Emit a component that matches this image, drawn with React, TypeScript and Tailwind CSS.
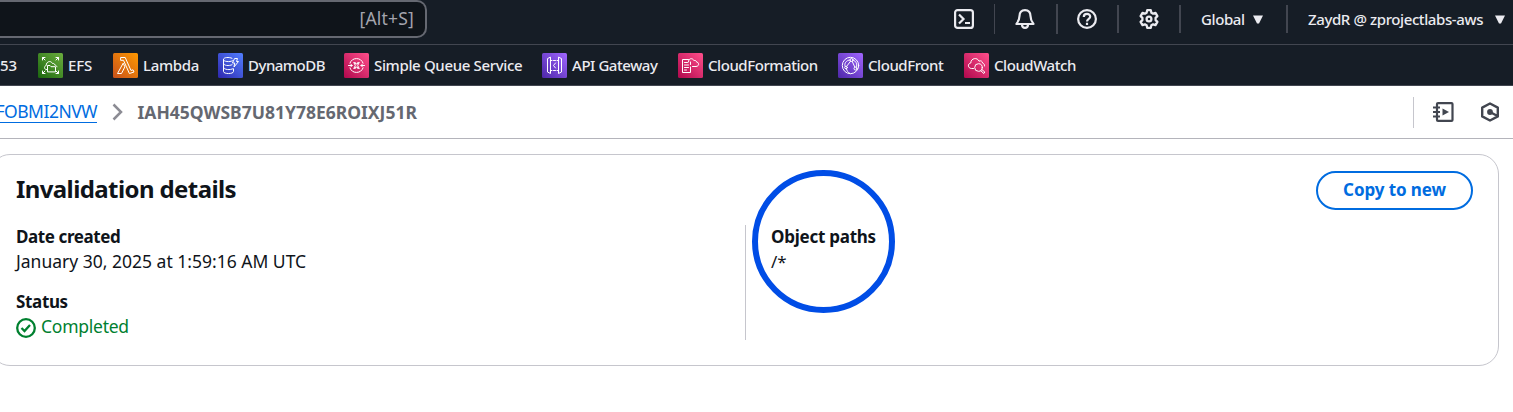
import type { ReactNode } from "react";

function ServiceIcon({ from, to, id, children }: { from: string; to: string; id: string; children: ReactNode }) {
  return (
    <svg className="size-[25px] shrink-0" viewBox="0 0 25 25" fill="none" stroke="#fff" strokeWidth="1" strokeLinejoin="round" strokeLinecap="round">
      <defs>
        <linearGradient id={id} x1="0" y1="1" x2="1" y2="0">
          <stop offset="0" stopColor={from} />
          <stop offset="1" stopColor={to} />
        </linearGradient>
      </defs>
      <rect width="25" height="25" rx="1.5" fill={`url(#${id})`} stroke="none" />
      {children}
    </svg>
  );
}

const services = [
  {
    name: "EFS", width: "w-[75px]", tracking: "tracking-[-0.1px]", from: "#1b660f", to: "#6cae3e",
    icon: (
      <>
        <path d="M4.500 7v-2.500h2.500M4.500 4.500l2.500 2.500M18 4.500h2.500v2.500M20.500 4.500l-2.500 2.500M4.500 18v2.500h2.500M4.500 20.500l2.500-2.500M20.500 18v2.500h-2.500M20.500 20.500l-2.500-2.500" />
        <path d="M9.500 18.500v-6h2.500l1 1.200h4.500v4.800zM9 16.500H8c-2-.5-2-3.500.2-4 0-4 4.500-5.500 6.300-2 1.500-.3 2.200.5 2.200 1.500 1.200.2 2 .8 2.200 1.800" />
      </>
    ),
  },
  {
    name: "Lambda", width: "w-[105px]", tracking: "tracking-[-0.35px]", from: "#c8511b", to: "#ff9900",
    icon: <path d="M10 10.500L4.500 20.500h4l3.200-6.300zM8 4.500h4.200l5.800 13 2-.7 1 2.200-4.600 1.500L10.500 7.300H8z" />,
  },
  {
    name: "DynamoDB", width: "w-[126px]", tracking: "tracking-[-0.5px]", from: "#2e27ad", to: "#527fff",
    icon: (
      <>
        <path d="M14 5.300C11 3.800 5.500 4.300 5.500 6.500s6 2.800 9 1.300M5.500 6.500v12c0 2.700 10 2.700 10 0V16" />
        <path d="M5.500 10.500c0 2.300 5.500 2.600 8.500 1.300M5.500 14.500c0 2.300 7 2.800 9.500 1.200M17 5.500h2.500l-1 3h2l-4.500 5.500.7-4H14.800z" />
      </>
    ),
  },
  {
    name: "Simple Queue Service", width: "w-[198px]", tracking: "tracking-[-0.35px]", from: "#b0084d", to: "#ff4f8b",
    icon: (
      <>
        <path d="M6 10a7 7 0 0 1 13 0M6 15a7 7 0 0 0 13 0M4.500 12.500h3.500M6.700 11l1.500 1.500-1.500 1.500M17 12.500h3.500M18.500 11l-1.500 1.500 1.500 1.500" />
        <path d="M10 9.700h1.500v1.200h2V9.700H15M10 15.300h1.500v-1.200h2v1.200H15M10 9.700l1.300 2.800-1.300 2.800M15 9.700l-1.300 2.800 1.300 2.800" />
      </>
    ),
  },
  {
    name: "API Gateway", width: "w-[136px]", tracking: "tracking-[-0.45px]", from: "#4d27a8", to: "#a166ff",
    icon: (
      <path d="M8.500 4.500v16l-3-1.500V6zM16.500 4.500v16l3-1.500V6zM13.500 10l-2 2.500 2 2.500M8.500 7.500h1.500M11.500 7.500h2M15 7.500h1.500M8.500 17.500h1.500M11.500 17.500h2M15 17.500h1.500" />
    ),
  },
  {
    name: "CloudFormation", width: "w-[160px]", tracking: "tracking-[-0.45px]", from: "#b0084d", to: "#ff4f8b",
    icon: (
      <>
        <path d="M10.500 6.500H4.500v13h8V14M12.500 9v2.500M6.500 9.500h3M6.500 12h4M6.500 14.500h4M6.500 17h2" />
        <path d="M14.500 13.500H18c3.500-.2 3.300-4.300.5-4.500-.2-1.500-1.500-2-2.500-1.300C14.500 4.300 10 5.500 10.500 9" />
      </>
    ),
  },
  {
    name: "CloudFront", width: "w-[126px]", tracking: "tracking-[-0.45px]", from: "#4d27a8", to: "#a166ff",
    icon: (
      <>
        <circle cx="12.500" cy="12.500" r="8.200" />
        <circle cx="13.500" cy="7" r="1.500" />
        <circle cx="17.500" cy="15.500" r="1.500" />
        <circle cx="8" cy="14.500" r="1.300" />
        <path d="M12.500 8.300L8.700 13.200M14.200 8.400l2.700 5.800M12 7c-4 0-6 4-5 6M8.500 16c.5 2 1.500 3.500 3.500 4.500M15 7c3 1 4.500 4 3.500 7" />
      </>
    ),
  },
  {
    name: "CloudWatch", width: "w-[120px]", tracking: "tracking-[-0.45px]", from: "#b0084d", to: "#ff4f8b",
    icon: (
      <>
        <path d="M9.500 15.500H7.500c-4-.3-4-5-.7-5.500 0-5 6.700-6 8.200-1.800 1.700-1 3.500.1 3.500 1.800 1.500.5 2.200 1.500 2 3" />
        <circle cx="14.500" cy="14.500" r="3.800" />
        <path d="M17.800 16.500l3 2.500-1 1.500-3-2.800" />
      </>
    ),
  },
];

function TopBar() {
  return (
    <div className="flex h-[45px] border-b border-[#424650] text-[15px] font-medium text-[#ebebf0]">
      <div className="flex h-[38px] w-[427px] items-center justify-end rounded-r-[10px] border-2 border-l-0 border-[#656871] bg-[#0f141a] pr-[11px] pb-px text-[17.5px] font-normal text-[#a4a4ad]">
        <span className="tracking-[0.2px]">[Alt+S]</span>
      </div>
      <div className="flex h-[38px] w-[568px] items-center justify-end">
        <div className="flex w-[41px] items-center justify-between">
          <svg className="size-5" viewBox="0 0 20 20" fill="none" stroke="currentColor" strokeWidth="2.200">
            <rect x="1.100" y="1.100" width="17.800" height="17.800" rx="2.500" />
            <path d="M5 5.500L9.500 10 5 14.500M11 14h5" />
          </svg>
          <span className="h-[30px] w-px bg-[#424650]" />
        </div>
      </div>
      <div className="flex h-[38px] w-[63px] items-center justify-between pl-5">
        <svg className="size-5" viewBox="0 0 20 20" fill="none" stroke="currentColor" strokeWidth="2.200" strokeLinejoin="round">
          <path d="M10 1.100C6.300 1.100 4.500 3.500 4.500 7c0 4-1.200 5.500-3 8h17c-1.800-2.500-3-4-3-8 0-3.500-1.800-5.900-5.500-5.900z" />
          <path d="M7 15.500c0 4.500 6 4.500 6 0" />
        </svg>
        <span className="h-[30px] w-[2px] bg-[#424650]" />
      </div>
      <div className="flex h-[38px] w-[61px] items-center justify-between pl-[19px]">
        <svg className="size-5" viewBox="0 0 20 20" fill="none" stroke="currentColor" strokeWidth="2.200">
          <circle cx="10" cy="10" r="8.900" />
          <path d="M6.800 8c0-4 6.400-4 6.400-.3C13.200 10 10 9.700 10 12.500M10 13.700v2.200" />
        </svg>
        <span className="h-7 w-[2px] bg-[#424650]" />
      </div>
      <div className="flex h-[38px] w-[62px] items-center justify-between pl-5">
        <svg className="size-5" viewBox="0 0 20 20" fill="none" stroke="currentColor" strokeWidth="2.300" strokeLinejoin="round">
          <path d="M8.200 1.200h3.600l.6 2.500 1.700 1 2.400-.8 1.900 3.200-1.800 1.800v2.200l1.800 1.800-1.900 3.200-2.400-.8-1.700 1-.6 2.500H8.200l-.6-2.500-1.700-1-2.400.8-1.900-3.200 1.800-1.800V8.900L1.600 7.100l1.900-3.200 2.400.8 1.700-1z" />
          <circle cx="10" cy="10" r="2.400" />
        </svg>
        <span className="h-7 w-[2px] bg-[#424650]" />
      </div>
      <div className="flex h-[38px] w-[107px] items-center pl-5">
        <span className="w-[52px] whitespace-nowrap tracking-[-0.4px]">Global</span>
        <svg className="h-[9px] w-[10px]" viewBox="0 0 10 9" fill="currentColor"><path d="M0 0.500h10L6 8.500H4z" /></svg>
        <span className="ml-auto h-7 w-[2px] bg-[#424650]" />
      </div>
      <div className="flex h-[38px] items-center pl-5">
        <span className="w-[187px] whitespace-nowrap tracking-[-0.4px]">ZaydR @ zprojectlabs-aws</span>
        <svg className="h-[9px] w-[10px]" viewBox="0 0 10 9" fill="currentColor"><path d="M0 0.500h10L6 8.500H4z" /></svg>
      </div>
    </div>
  );
}

function Favorites() {
  return (
    <div className="flex h-[41px] items-center border-b border-[#424650] text-[15px] font-medium text-[#ebebf0]">
      <span className="w-[38px] whitespace-nowrap">53</span>
      {services.map((s) => (
        <div key={s.name} className={`flex shrink-0 items-center gap-[5px] ${s.width}`}>
          <ServiceIcon id={s.name.replaceAll(" ", "")} from={s.from} to={s.to}>{s.icon}</ServiceIcon>
          <span className={`whitespace-nowrap ${s.tracking}`}>{s.name}</span>
        </div>
      ))}
    </div>
  );
}

function Breadcrumbs() {
  return (
    <div className="flex h-[53px] items-center border-b border-[#b4b4bb] text-[17.5px]">
      <div className="flex w-[97px] justify-end">
        <a className="border-b border-[#006ce0] leading-[21px] whitespace-nowrap tracking-[-0.5px] text-[#006ce0]">FOBMI2NVW</a>
      </div>
      <svg className="ml-[15px] h-[18px] w-[11px]" viewBox="0 0 11 18" fill="none" stroke="#8c8c94" strokeWidth="2.500"><path d="M1.500 1.500L9 9l-7.500 7.500" /></svg>
      <span className="ml-[14.500px] whitespace-nowrap font-bold text-[#656871]">IAH45QWSB7U81Y78E6ROIXJ51R</span>
      <div className="ml-auto flex items-center pr-[14px] text-[#424650]">
        <span className="mr-[19px] h-[31px] w-px bg-[#c6c6cd]" />
        <svg className="mr-[27px] h-5 w-[21px]" viewBox="0 0 21 20" fill="none" stroke="currentColor" strokeWidth="2.200">
          <rect x="4" y="1.100" width="15.500" height="17.800" rx="1" />
          <path d="M0 5.500h7M0 10h7M0 14.500h7" />
          <path d="M9.500 6.500v7l6.500-3.500z" fill="currentColor" stroke="none" />
        </svg>
        <svg className="h-5 w-[18px]" viewBox="0 0 18 20" fill="none" stroke="currentColor" strokeWidth="2.400" strokeLinejoin="round">
          <path d="M9 1.500L16.800 5.600v8.800L9 18.500l-7.800-4.100V5.600zM9 10l7.500 4" />
          <circle cx="9" cy="10" r="2.900" fill="currentColor" stroke="none" />
        </svg>
      </div>
    </div>
  );
}

function Details() {
  return (
    <section className="-ml-[10px] mt-[15px] h-[212px] w-[1509px] rounded-[20px] border border-[#c6c6cd] px-[25px] pt-4 text-[17px] leading-[25px] text-[#0f141a]">
      <div className="flex h-[39px] items-center justify-between">
        <h2 className="pb-1 text-[24px] font-bold tracking-[-0.6px]">Invalidation details</h2>
        <button className="h-[39px] w-[157px] rounded-full border-2 border-[#006ce0] pb-[2px] font-bold tracking-[-0.1px] whitespace-nowrap text-[#006ce0]">Copy to new</button>
      </div>
      <div className="mt-[14px] flex h-[116px]">
        <div className="w-[729px]">
          <div className="font-bold tracking-[-0.4px]">Date created</div>
          <div className="whitespace-nowrap text-[17.5px]">January 30, 2025 at 1:59:16 AM UTC</div>
          <div className="mt-[15px] font-bold tracking-[-0.35px]">Status</div>
          <div className="flex items-center gap-[5px] text-[#00802f]">
            <svg className="mt-[2px] size-5" viewBox="0 0 20 20" fill="none" stroke="currentColor" strokeWidth="2.300">
              <circle cx="10" cy="10" r="8.800" />
              <path d="M5.500 10l3 3 5.500-6" />
            </svg>
            <span className="text-[17.5px] tracking-[-0.25px]">Completed</span>
          </div>
        </div>
        <div className="relative mt-px w-[300px] border-l border-[#c6c6cd] pl-[25px]">
          <div className="-mt-px font-bold tracking-[-0.25px]">Object paths</div>
          <div>/*</div>
          <div className="absolute left-[6px] top-[-55px] size-[143px] rounded-full border-[6px] border-[#004de6]" />
        </div>
      </div>
    </section>
  );
}

export default function App() {
  return (
    <div className="h-[412px] w-[1513px] overflow-hidden bg-white font-['Noto_Sans','Open_Sans',sans-serif]">
      <header className="bg-[#161d26]">
        <TopBar />
        <Favorites />
      </header>
      <Breadcrumbs />
      <Details />
    </div>
  );
}
